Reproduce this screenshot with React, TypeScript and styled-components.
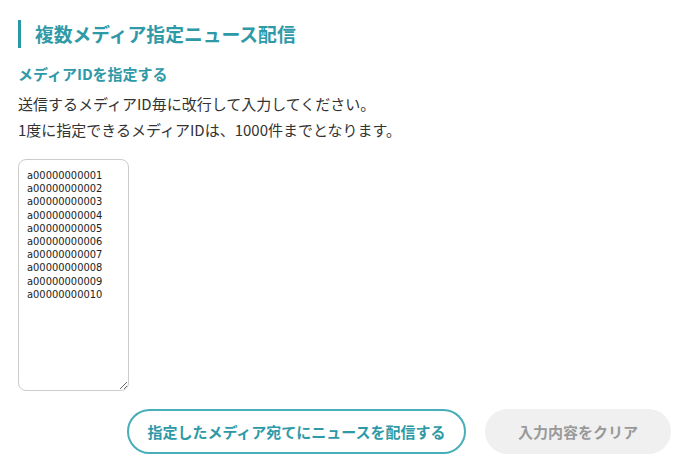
import styled, { createGlobalStyle } from "styled-components";

const GlobalStyle = createGlobalStyle`
  body {
    margin: 0;
    background: #fff;
    font-family: "Noto Sans CJK JP", "Noto Sans", sans-serif;
    color: #333;
  }
`;

const ids = Array.from(
  { length: 10 },
  (_, i) => "a" + String(i + 1).padStart(11, "0")
).join("\n");

export default function App() {
  return (
    <>
      <GlobalStyle />
      <Page>
        <Heading>複数メディア指定ニュース配信</Heading>
        <SubHeading>メディアIDを指定する</SubHeading>
        <Note>
          送信するメディアID毎に改行して入力してください。
          <br />
          1度に指定できるメディアIDは、1000件までとなります。
        </Note>
        <IdInput defaultValue={ids} spellCheck={false} />
        <Actions>
          <Button $width={339}>指定したメディア宛てにニュースを配信する</Button>
          <Button $width={186} $variant="muted">
            入力内容をクリア
          </Button>
        </Actions>
      </Page>
    </>
  );
}

// SECTION - styled-components
const Page = styled.div`
  padding: 20px 17px 0 18px;
  display: flex;
  flex-direction: column;
`;

const Heading = styled.h1`
  margin: 0;
  height: 28px;
  line-height: 28px;
  border-left: 3px solid #2a97a4;
  padding-left: 14px;
  font-size: 18.8px;
  font-weight: 700;
  color: #2f9aa7;
`;

const SubHeading = styled.h2`
  margin: 16px 0 0;
  font-size: 15px;
  line-height: 20px;
  font-weight: 700;
  color: #2f9aa7;
`;

const Note = styled.p`
  margin: 7px 0 0;
  font-size: 15px;
  line-height: 26px;
  color: #333;
`;

const IdInput = styled.textarea`
  display: block;
  box-sizing: border-box;
  margin-top: 16px;
  width: 111px;
  height: 232px;
  padding: 9px 8px;
  border: 1px solid #ccc;
  border-radius: 8px;
  font-family: "Liberation Sans Narrow", "DejaVu Sans Condensed", sans-serif;
  font-size: 11px;
  line-height: 13.2px;
  color: #222;
  resize: vertical;
  outline: none;
`;

const Actions = styled.div`
  margin-top: 18px;
  display: flex;
  justify-content: flex-end;
  gap: 19px;
`;

const Button = styled.button<{ $variant?: "primary" | "muted"; $width: number }>`
  box-sizing: border-box;
  width: ${(p) => p.$width}px;
  height: 45px;
  padding: 0;
  border-radius: 999px;
  font-family: "Noto Sans CJK JP", "Noto Sans", sans-serif;
  font-size: 15px;
  font-weight: 700;
  cursor: pointer;
  border: 2px solid
    ${(p) => (p.$variant === "muted" ? "#f0f0f0" : "#48aeb9")};
  background: ${(p) => (p.$variant === "muted" ? "#f0f0f0" : "#fff")};
  color: ${(p) => (p.$variant === "muted" ? "#999" : "#2f9aa7")};
`;
